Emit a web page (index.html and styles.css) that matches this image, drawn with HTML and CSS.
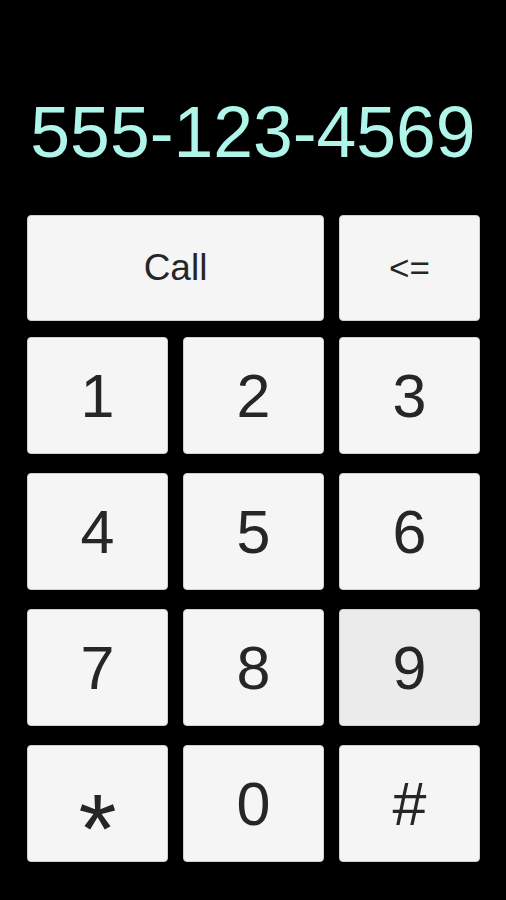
FILE: index.html
```html
<!DOCTYPE html>
<html lang="en">
  <head>
    <meta charset="UTF-8" />
    <meta name="viewport" content="width=device-width, initial-scale=1.0" />
    <title>Dialer</title>
    <link rel="stylesheet" href="styles.css">
  </head>
  <body>
    <div class="display">
      <p id="number">555-123-4569</p>
    </div>
    <div class="actions">
      <button class="key key-call">Call</button>
      <button class="key key-back">&lt;=</button>
    </div>
    <div class="keypad">
      <button class="key">1</button>
      <button class="key">2</button>
      <button class="key">3</button>
      <button class="key">4</button>
      <button class="key">5</button>
      <button class="key">6</button>
      <button class="key">7</button>
      <button class="key">8</button>
      <button class="key pressed">9</button>
      <button class="key"><span class="star">*</span></button>
      <button class="key">0</button>
      <button class="key">#</button>
    </div>
  </body>
</html>
```

FILE: styles.css
```css
body {
  font-family: "Liberation Sans", Arial, sans-serif;
  background-color: #000;
  margin: 0;
  padding: 0;
  width: 506px;
  height: 900px;
  overflow: hidden;
}

.display {
  box-sizing: border-box;
  height: 215px;
  padding-top: 92px;
  text-align: center;
}

#number {
  margin: 0;
  font-size: 71.5px;
  line-height: 80px;
  color: #aff5e9;
}

.actions,
.keypad {
  display: grid;
  grid-template-columns: repeat(3, 1fr);
  column-gap: 15px;
  margin: 0 26px 0 27px;
}

.actions {
  grid-template-rows: 106px;
  margin-bottom: 16px;
}

.key-call {
  grid-column: span 2;
}

.keypad {
  grid-auto-rows: 117px;
  row-gap: 19px;
}

.key {
  display: flex;
  align-items: center;
  justify-content: center;
  padding: 0;
  font-family: inherit;
  font-size: 61px;
  color: #262626;
  background-color: #f5f5f5;
  border: 1px solid #cfcfcf;
  border-radius: 4px;
  cursor: pointer;
}

.key-call,
.key-back {
  font-size: 37px;
}

.key-back {
  font-size: 35px;
}

.key.pressed {
  background-color: #ebebeb;
}

.star {
  font-size: 98px;
  line-height: 1;
  transform: translateY(25px);
}
```
